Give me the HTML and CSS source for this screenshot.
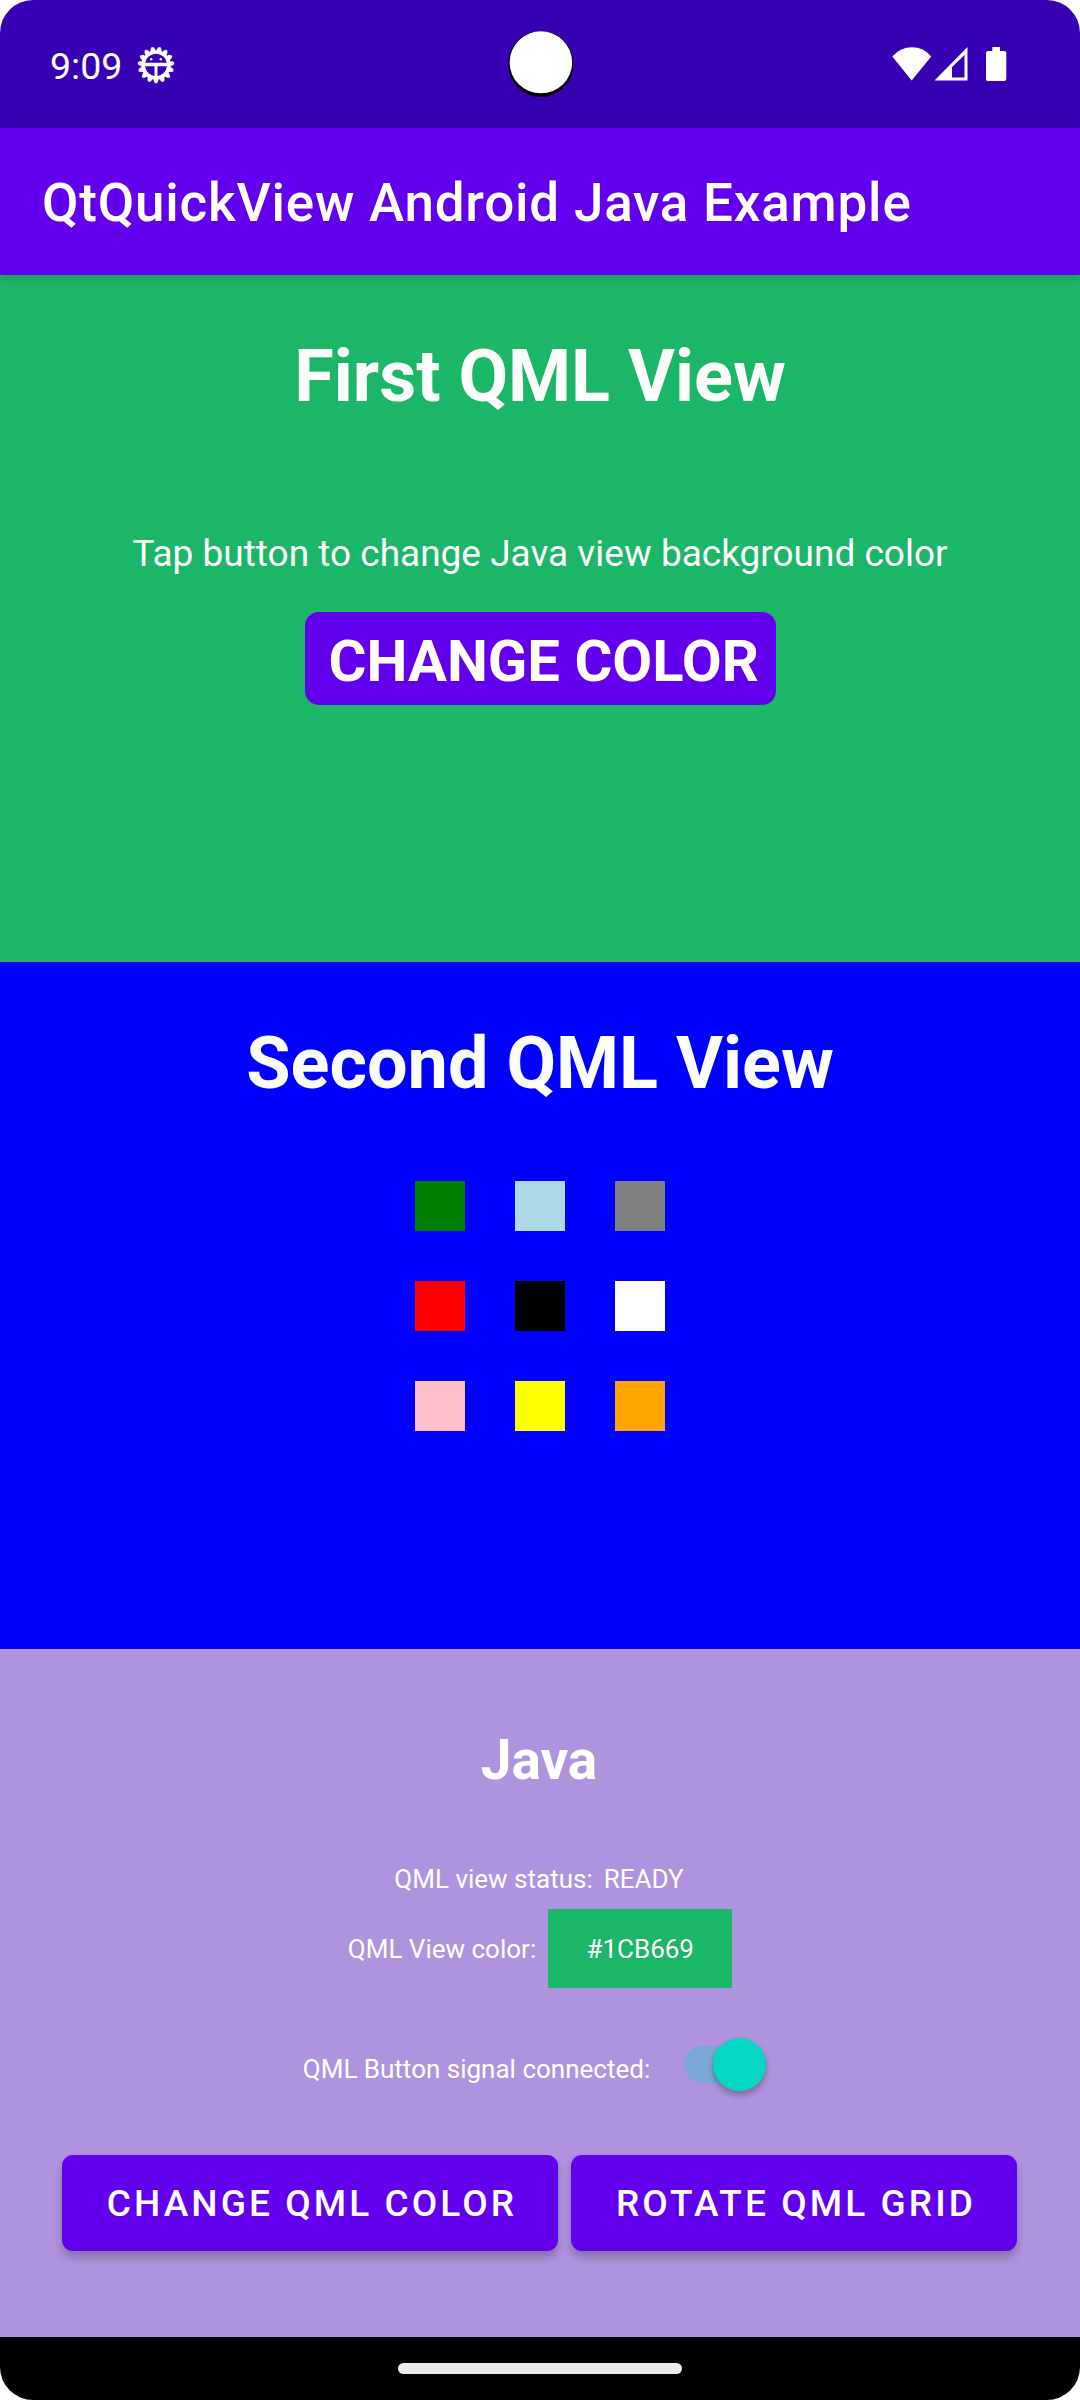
FILE: index.html
```html
<!DOCTYPE html>
<html lang="en">
<head>
<meta charset="utf-8">
<title>QtQuickView Android Java Example</title>
<link rel="stylesheet" href="styles.css">
</head>
<body>
<div class="screen">
  <header class="status-bar">
    <span class="clock">9:09</span>
    <svg class="debug-icon" width="38" height="38" viewBox="-19 -19 38 38">
      <circle r="14.8" fill="#fff"/>
      <g fill="none" stroke="#fff" transform="rotate(90)">
        <circle r="15.200" stroke-width="2" pathLength="15" stroke-dasharray=".74 .26" stroke-dashoffset=".37"/>
        <circle r="16.500" stroke-width="1.600" pathLength="15" stroke-dasharray=".56 .44" stroke-dashoffset=".28"/>
        <circle r="17.600" stroke-width="1.300" pathLength="15" stroke-dasharray=".36 .64" stroke-dashoffset=".18"/>
      </g>
      <path d="M-10.800-2.300A11 11 0 0 1 10.800-2.300Z" fill="#3700b3"/>
      <path d="M-10.900 1.200H-1.500V10.900A11 11 0 0 1-10.900 1.200ZM1.500 1.200H10.900A11 11 0 0 1 1.500 10.900Z" fill="#3700b3"/>
      <circle cx="-4.800" cy="-5.700" r="1.200" fill="#fff"/>
      <circle cx="4.800" cy="-5.700" r="1.200" fill="#fff"/>
    </svg>
    <svg class="camera" width="66" height="68" viewBox="0 0 66 68">
      <ellipse cx="32.8" cy="34" rx="32.6" ry="33"/>
      <ellipse cx="32.9" cy="32.3" rx="31.3" ry="31" fill="#fff"/>
    </svg>
    <svg class="system-icons" width="116" height="36" viewBox="0 0 116 36" fill="#fff">
      <path d="M.3 9.5Q8.500 .3 20 .3T39.300 9.500L19.700 33.500Z"/>
      <path d="M42.500 33.500L75.500 0V33.500ZM60 30.500H72.500V8L60 20Z" fill-rule="evenodd"/>
      <path d="M100.300 0H108V4H112.500Q114.300 4 114.300 6V32Q114.300 34 112.300 34H96Q94 34 94 32V6Q94 4 96 4H100.300Z"/>
    </svg>
  </header>

  <div class="app-bar"><h1 class="app-title">QtQuickView Android Java Example</h1></div>

  <section class="view view-first">
    <h2 class="view-title">First QML View</h2>
    <p class="hint">Tap button to change Java view background color</p>
    <button class="color-button">CHANGE COLOR</button>
  </section>

  <section class="view view-second">
    <h2 class="view-title">Second QML View</h2>
    <div class="grid">
      <i class="cell green"></i><i class="cell lightblue"></i><i class="cell gray"></i>
      <i class="cell red"></i><i class="cell black"></i><i class="cell white"></i>
      <i class="cell pink"></i><i class="cell yellow"></i><i class="cell orange"></i>
    </div>
  </section>

  <section class="java">
    <h2 class="java-title">Java</h2>
    <div class="row status-row"><span>QML view status:</span><span>READY</span></div>
    <div class="row color-row"><span>QML View color:</span><span class="color-box">#1CB669</span></div>
    <div class="row switch-row">
      <span class="switch-label">QML Button signal connected:</span>
      <span class="switch"><span class="thumb"></span></span>
    </div>
    <div class="actions">
      <button class="action action-color">CHANGE QML COLOR</button>
      <button class="action action-grid">ROTATE QML GRID</button>
    </div>
  </section>

  <footer class="nav-bar"><span class="nav-pill"></span></footer>
</div>
</body>
</html>
```
FILE: styles.css
```css
* { box-sizing: border-box; margin: 0; padding: 0; }
body { background: #fff; font-family: Roboto, sans-serif; color: #fff; }
button { border: 0; font-family: inherit; color: inherit; white-space: nowrap; }
.screen {
  width: 1080px; height: 2400px; overflow: hidden;
  display: flex; flex-direction: column;
  border-radius: 33px;
}

.status-bar {
  height: 128px; flex: none; position: relative;
  display: flex; align-items: center;
  padding: 0 72px 0 50px;
  background: #3700b3;
}
.clock { font-size: 37.500px; width: 87px; padding-top: 3px; }
.debug-icon { margin-top: 2px; }
.camera { position: absolute; left: 507.500px; top: 30px; }
.system-icons { margin: 2px 0 0 auto; }

.app-bar {
  height: 147px; flex: none; position: relative; z-index: 1;
  display: flex; align-items: center;
  padding: 3px 0 0 42px;
  background: #6200ee;
  box-shadow: 0 3px 10px rgba(0, 0, 0, .16);
}
.app-title { font-size: 53px; font-weight: 500; letter-spacing: .780px; white-space: nowrap; }

.view {
  height: 687px; flex: none;
  display: flex; flex-direction: column; align-items: center;
  padding-top: 60px;
}
.view-first { background: #1cb669; }
.view-second { background: #00f; }
.view-title { font-size: 72px; line-height: 84px; font-weight: 700; }
.hint { margin-top: 113px; font-size: 37px; line-height: 44px; }
.color-button {
  margin-top: 36px; width: 471px; height: 93px;
  padding: 4px 0 0 24px; text-align: left;
  border-radius: 14px; background: #6200ee;
  font-size: 58px; font-weight: 700;
}

.grid {
  margin-top: 75px;
  display: grid; grid-template-columns: repeat(3, 50px); grid-auto-rows: 50px; gap: 50px;
}
.green { background: green; }
.lightblue { background: lightblue; }
.gray { background: gray; }
.red { background: red; }
.black { background: black; }
.white { background: white; }
.pink { background: pink; }
.yellow { background: yellow; }
.orange { background: orange; }

.java {
  height: 688px; flex: none;
  display: flex; flex-direction: column; align-items: center;
  padding: 79px 2px 0 0;
  background: #af93de;
}
.java-title { font-size: 55px; line-height: 64px; font-weight: 700; }
.row { display: flex; align-items: center; font-size: 26px; line-height: 32px; }
.status-row { margin-top: 71px; gap: 11px; }
.color-row { margin: 14px 0 0 2px; height: 79px; gap: 12px; }
.color-box {
  width: 184px; height: 79px;
  display: flex; align-items: center; justify-content: center;
  background: #1cb669;
}
.switch-row { margin: 50px 9px 0 0; height: 53px; gap: 34px; }
.switch-label { padding-top: 8px; }
.switch {
  width: 82px; height: 37px; border-radius: 19px;
  display: flex; align-items: center; justify-content: flex-end;
  background: #7ba7d7;
}
.thumb {
  width: 53px; height: 53px; border-radius: 50%; flex: none;
  background: #05d7c5;
  box-shadow: 0 4px 6px rgba(0, 0, 0, .3);
}
.actions { margin-top: 64px; display: flex; gap: 13px; }
.action {
  height: 96px; padding: 1px 0 0 5px;
  border-radius: 11px; background: #6200ee;
  font-size: 37px; font-weight: 500; letter-spacing: 3.080px;
  box-shadow: 0 6px 9px rgba(0, 0, 0, .24);
}
.action-color { width: 496px; }
.action-grid { width: 446px; }

.nav-bar {
  height: 63px; flex: none;
  display: flex; align-items: center; justify-content: center;
  background: #000;
}
.nav-pill { width: 284px; height: 11px; border-radius: 6px; background: #ebebeb; }
```
